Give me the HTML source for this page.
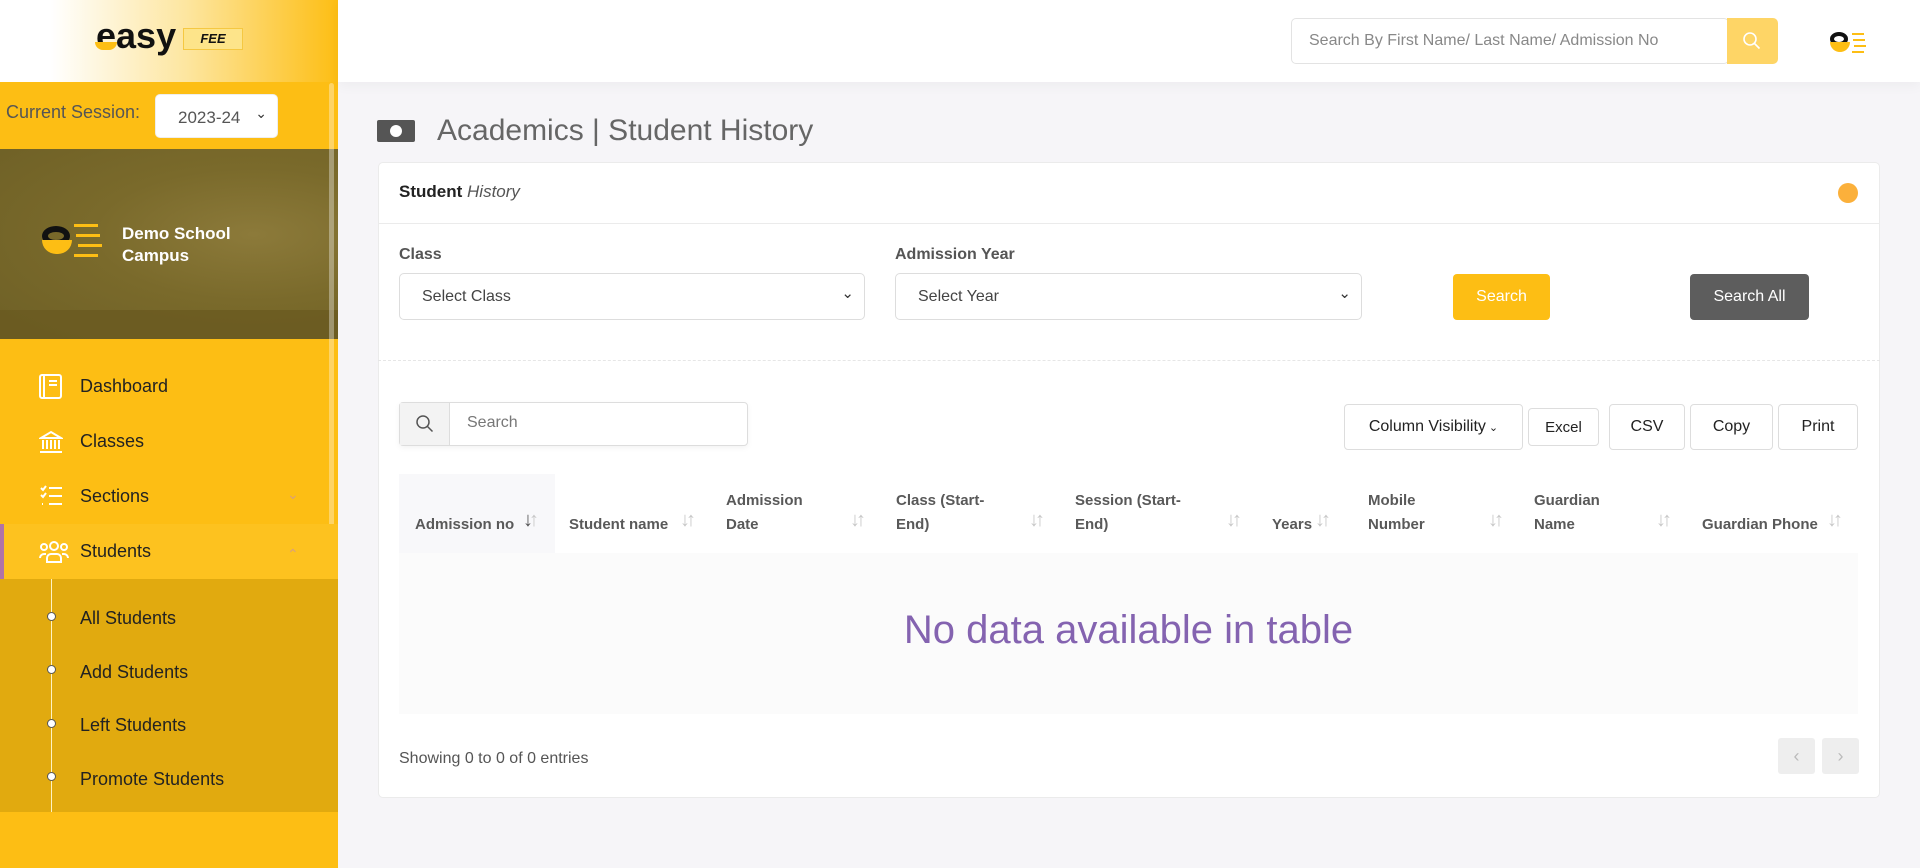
<!DOCTYPE html>
<html><head><meta charset="utf-8"><style>
*{box-sizing:border-box;margin:0;padding:0}
body{width:1920px;height:868px;overflow:hidden;background:#f6f5f8;font-family:"Liberation Sans",sans-serif;position:relative;color:#333}
.a{position:absolute}
.side{left:0;top:0;width:338px;height:868px;background:#fdbe14}
.logo{left:0;top:0;width:338px;height:82px;background:linear-gradient(90deg,#fff 0%,#fff 15%,#fde6a0 55%,#fdbe14 100%)}
.top{left:338px;top:0;width:1582px;height:82px;background:#fff;box-shadow:0 4px 12px rgba(0,0,0,.04)}
.menu{font-size:18px;color:#222}
.th{font-size:15px;font-weight:bold;color:#595959;line-height:24px}
.sort{font-size:20px;color:#c8c8c8;letter-spacing:-4px}
.btn{border:1px solid #ddd;border-radius:4px;background:#fff;font-size:16px;color:#222;display:flex;align-items:center;justify-content:center}
</style></head><body>
<div class="a side"></div>
<div class="a logo"></div>
<div class="a" style="left:96px;top:16px;font-size:36px;font-weight:bold;color:#111;letter-spacing:0px;line-height:40px">easy</div>
<div class="a" style="left:95px;top:42px;width:22px;height:8px;background:#fdbe14;border-radius:0 0 10px 10px"></div>
<div class="a" style="left:183px;top:28px;width:60px;height:22px;background:#fde48a;border:1px solid #f5c842;font-size:13px;font-weight:bold;font-style:italic;color:#111;text-align:center;line-height:20px">FEE</div>
<div class="a" style="left:6px;top:102px;font-size:18px;color:#555">Current Session:</div>
<div class="a" style="left:155px;top:94px;width:123px;height:44px;background:#fff;border-radius:5px;border:1px solid #eee;font-size:17px;color:#555;padding:13px 0 0 22px">2023-24<span style="position:absolute;right:10px;top:10px;font-size:14px;color:#333">&#8964;</span></div>
<div class="a" style="left:0;top:149px;width:338px;height:190px;background:radial-gradient(ellipse at 75% 45%,#8c7a3a 0%,#7a6a2b 45%,#6e6026 100%)"></div>
<div class="a" style="left:0;top:310px;width:338px;height:29px;background:#6a5a20;opacity:.8"></div>
<div class="a" style="left:42px;top:226px;width:28px;height:20px;border:6px solid #111;border-radius:50%"></div>
<div class="a" style="left:42px;top:240px;width:30px;height:14px;background:#fdbe14;border-radius:0 0 14px 14px"></div>
<div class="a" style="left:74px;top:224px;width:24px;height:3px;background:#fdbe14;box-shadow:2px 10px 0 #fdbe14,4px 20px 0 #fdbe14,0 30px 0 #fdbe14"></div>
<div class="a" style="left:122px;top:223px;font-size:17px;font-weight:bold;color:#fff;line-height:22px">Demo School<br>Campus</div>
<div class="a" style="left:329px;top:83px;width:5px;height:545px;background:rgba(255,255,255,.35);border-radius:3px"></div>
<div class="a" style="left:0;top:524px;width:338px;height:55px;background:#fdc21f"></div>
<div class="a" style="left:0;top:524px;width:4px;height:55px;background:#b073a8"></div>
<div class="a" style="left:0;top:579px;width:338px;height:233px;background:#e1aa0f"></div>
<div class="a" style="left:51px;top:579px;width:1px;height:233px;background:#fff3c4"></div>
<svg class="a" style="left:39px;top:374px" width="24" height="26" viewBox="0 0 24 26" fill="none" stroke="#fff" stroke-width="2"><rect x="1" y="1" width="21" height="23" rx="2"/><line x1="5" y1="1" x2="5" y2="24"/><line x1="10" y1="7" x2="18" y2="7"/><line x1="10" y1="11" x2="18" y2="11"/></svg>
<svg class="a" style="left:39px;top:430px" width="24" height="24" viewBox="0 0 24 24" fill="none" stroke="#fff" stroke-width="2"><path d="M2 8 L12 2 L22 8 Z M4 10v9M8 10v9M12 10v9M16 10v9M20 10v9M1 22h22"/></svg>
<svg class="a" style="left:39px;top:485px" width="24" height="22" viewBox="0 0 24 22" fill="none" stroke="#fff" stroke-width="2"><path d="M2 3l2 2 3-4M2 10l2 2 3-4M3 19h1M10 3h13M10 11h13M10 19h13"/></svg>
<svg class="a" style="left:39px;top:540px" width="30" height="24" viewBox="0 0 30 24" fill="none" stroke="#fff" stroke-width="2"><circle cx="15" cy="6" r="4"/><circle cx="5" cy="7" r="3"/><circle cx="25" cy="7" r="3"/><path d="M8 22v-4a4 4 0 014-4h6a4 4 0 014 4v4zM1 18a4 4 0 014-4h2M29 18a4 4 0 00-4-4h-2"/></svg>
<div class="a menu" style="left:80px;top:376px">Dashboard</div>
<div class="a menu" style="left:80px;top:431px">Classes</div>
<div class="a menu" style="left:80px;top:486px">Sections</div>
<div class="a menu" style="left:80px;top:541px">Students</div>
<div class="a" style="left:287px;top:486px;color:#d9a17a;font-size:14px">&#8964;</div>
<div class="a" style="left:287px;top:546px;color:#d9a17a;font-size:14px">&#8963;</div>
<div class="a menu" style="left:80px;top:608px">All Students</div>
<div class="a menu" style="left:80px;top:662px">Add Students</div>
<div class="a menu" style="left:80px;top:715px">Left Students</div>
<div class="a menu" style="left:80px;top:769px">Promote Students</div>
<div class="a" style="left:47px;top:612px;width:9px;height:9px;border-radius:50%;background:#fff;border:1px solid #555"></div>
<div class="a" style="left:47px;top:665px;width:9px;height:9px;border-radius:50%;background:#fff;border:1px solid #555"></div>
<div class="a" style="left:47px;top:719px;width:9px;height:9px;border-radius:50%;background:#fff;border:1px solid #555"></div>
<div class="a" style="left:47px;top:772px;width:9px;height:9px;border-radius:50%;background:#fff;border:1px solid #555"></div>
<div class="a top"></div>
<div class="a" style="left:1291px;top:18px;width:438px;height:46px;border:1px solid #e3e3e3;border-radius:5px;font-size:16px;color:#888;padding:13px 0 0 17px">Search By First Name/ Last Name/ Admission No</div>
<div class="a" style="left:1727px;top:18px;width:51px;height:46px;background:#fed566;border-radius:0 5px 5px 0"></div>
<svg class="a" style="left:1742px;top:31px" width="20" height="20" viewBox="0 0 20 20" fill="none" stroke="#fff" stroke-width="1.6"><circle cx="8" cy="8" r="6"/><path d="M12.5 12.5l5 5"/></svg>
<div class="a" style="left:1830px;top:32px;width:18px;height:14px;border:4px solid #111;border-radius:50%"></div>
<div class="a" style="left:1830px;top:42px;width:20px;height:10px;background:#fdbe14;border-radius:0 0 10px 10px"></div>
<div class="a" style="left:1852px;top:33px;width:12px;height:2px;background:#fdbe14;box-shadow:1px 6px 0 #fdbe14,2px 12px 0 #fdbe14,0 18px 0 #fdbe14"></div>
<div class="a" style="left:377px;top:120px;width:38px;height:22px;background:#555;border-radius:2px"></div>
<div class="a" style="left:390px;top:125px;width:12px;height:12px;background:#fff;border-radius:50%"></div>
<div class="a" style="left:437px;top:114px;font-size:30px;color:#666">Academics | Student History</div>
<div class="a" style="left:378px;top:162px;width:1502px;height:636px;background:#fff;border:1px solid #ebebeb;border-radius:5px"></div>
<div class="a" style="left:378px;top:223px;width:1502px;height:1px;background:#ebebeb"></div>
<div class="a" style="left:399px;top:182px;font-size:17px;color:#222"><b style="font-weight:600">Student</b> <i style="color:#555">History</i></div>
<div class="a" style="left:1838px;top:183px;width:20px;height:20px;border-radius:50%;background:#fbb03b"></div>
<div class="a" style="left:399px;top:246px;font-size:16px;color:#555;font-weight:600">Class</div>
<div class="a" style="left:895px;top:246px;font-size:16px;color:#555;font-weight:600">Admission Year</div>
<div class="a" style="left:399px;top:273px;width:466px;height:47px;border:1px solid #ddd;border-radius:5px;font-size:16px;color:#444;padding:14px 0 0 22px">Select Class<span style="position:absolute;right:10px;top:10px;font-size:15px;color:#333">&#8964;</span></div>
<div class="a" style="left:895px;top:273px;width:467px;height:47px;border:1px solid #ddd;border-radius:5px;font-size:16px;color:#444;padding:14px 0 0 22px">Select Year<span style="position:absolute;right:10px;top:10px;font-size:15px;color:#333">&#8964;</span></div>
<div class="a" style="left:1453px;top:274px;width:97px;height:46px;background:#fdbe14;border-radius:4px;color:#fff;font-size:16px;text-align:center;line-height:46px">Search</div>
<div class="a" style="left:1690px;top:274px;width:119px;height:46px;background:#5d5d5d;border-radius:4px;color:#fff;font-size:16px;text-align:center;line-height:46px">Search All</div>
<div class="a" style="left:378px;top:360px;width:1502px;border-top:1px dashed #e6e6e6"></div>
<div class="a" style="left:399px;top:402px;width:349px;height:44px;border:1px solid #ddd;border-radius:4px;box-shadow:0 2px 6px rgba(0,0,0,.05)"></div>
<div class="a" style="left:400px;top:403px;width:50px;height:42px;background:#f3f3f3;border-right:1px solid #ddd"></div>
<svg class="a" style="left:415px;top:414px" width="20" height="20" viewBox="0 0 20 20" fill="none" stroke="#555" stroke-width="1.5"><circle cx="8" cy="8" r="6"/><path d="M12.5 12.5l5 5"/></svg>
<div class="a" style="left:467px;top:414px;font-size:16px;color:#777">Search</div>
<div class="a btn" style="left:1344px;top:404px;width:179px;height:46px">Column Visibility <span style="font-size:11px;margin-left:3px">&#8964;</span></div>
<div class="a btn" style="left:1528px;top:408px;width:71px;height:38px;font-size:15px">Excel</div>
<div class="a btn" style="left:1609px;top:404px;width:76px;height:46px">CSV</div>
<div class="a btn" style="left:1690px;top:404px;width:83px;height:46px">Copy</div>
<div class="a btn" style="left:1778px;top:404px;width:80px;height:46px">Print</div>
<div class="a" style="left:399px;top:474px;width:156px;height:79px;background:#f8f8fa"></div>
<div class="a" style="left:399px;top:553px;width:1459px;height:161px;background:#fbfbfb"></div>
<div class="a th" style="left:415px;top:513px">Admission no</div>
<div class="a th" style="left:569px;top:513px">Student name</div>
<div class="a th" style="left:726px;top:489px">Admission<br>Date</div>
<div class="a th" style="left:896px;top:489px">Class (Start-<br>End)</div>
<div class="a th" style="left:1075px;top:489px">Session (Start-<br>End)</div>
<div class="a th" style="left:1272px;top:513px">Years</div>
<div class="a th" style="left:1368px;top:489px">Mobile<br>Number</div>
<div class="a th" style="left:1534px;top:489px">Guardian<br>Name</div>
<div class="a th" style="left:1702px;top:513px">Guardian Phone</div>
<div class="a sort" style="left:523px;top:509px"><span style="color:#555">&#8595;</span>&#8593;</div>
<div class="a sort" style="left:680px;top:509px">&#8595;&#8593;</div>
<div class="a sort" style="left:850px;top:509px">&#8595;&#8593;</div>
<div class="a sort" style="left:1029px;top:509px">&#8595;&#8593;</div>
<div class="a sort" style="left:1226px;top:509px">&#8595;&#8593;</div>
<div class="a sort" style="left:1315px;top:509px">&#8595;&#8593;</div>
<div class="a sort" style="left:1488px;top:509px">&#8595;&#8593;</div>
<div class="a sort" style="left:1656px;top:509px">&#8595;&#8593;</div>
<div class="a sort" style="left:1827px;top:509px">&#8595;&#8593;</div>
<div class="a" style="left:399px;top:608px;width:1459px;text-align:center;font-size:40px;color:#8463b0">No data available in table</div>
<div class="a" style="left:399px;top:750px;font-size:16px;color:#555">Showing 0 to 0 of 0 entries</div>
<div class="a" style="left:1778px;top:738px;width:37px;height:36px;background:#eee;border-radius:3px;color:#bbb;text-align:center;line-height:36px;font-size:18px">&#8249;</div>
<div class="a" style="left:1822px;top:738px;width:37px;height:36px;background:#eee;border-radius:3px;color:#bbb;text-align:center;line-height:36px;font-size:18px">&#8250;</div>
</body></html>
